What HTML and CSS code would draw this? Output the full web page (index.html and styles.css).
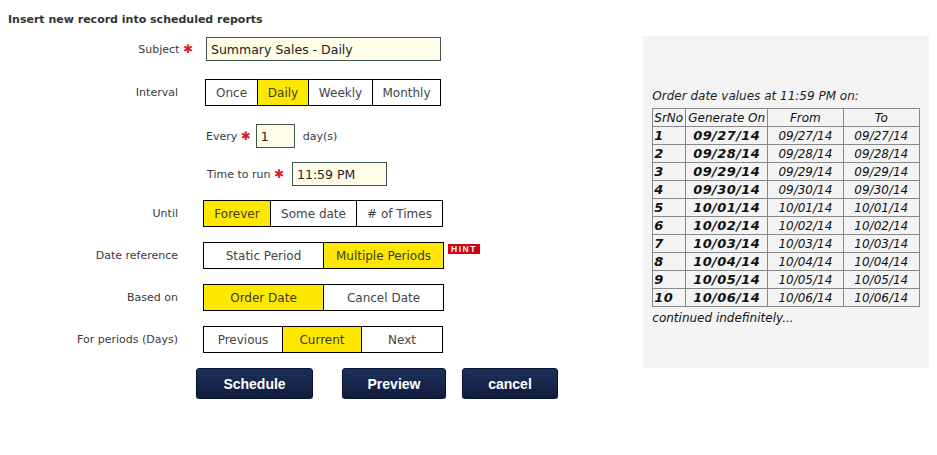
FILE: index.html
```html
<!DOCTYPE html>
<html lang="en">
<head>
    <meta charset="UTF-8">
    <title>Scheduled reports</title>
    <link rel="stylesheet" href="styles.css">
</head>
<body>
    <div class="page">
        <div class="form">
            <h3 class="title">Insert new record into scheduled reports</h3>

            <div class="row row-subject">
                <label class="label label-wide">Subject <span class="req">✱</span></label>
                <input type="text" class="field field-subject" value="Summary Sales - Daily">
            </div>

            <div class="row row-toggle row-interval">
                <span class="label">Interval</span>
                <div class="toggle toggle-interval">
                    <span class="opt">Once</span>
                    <span class="opt on">Daily</span>
                    <span class="opt">Weekly</span>
                    <span class="opt">Monthly</span>
                </div>
            </div>

            <div class="row row-sub row-every">
                <label class="sublabel">Every <span class="req">✱</span></label>
                <input type="text" class="field field-every" value="1">
                <span class="unit">day(s)</span>
            </div>

            <div class="row row-sub row-time">
                <label class="sublabel">Time to run <span class="req">✱</span></label>
                <input type="text" class="field field-time" value="11:59 PM">
            </div>

            <div class="row row-toggle">
                <span class="label">Until</span>
                <div class="toggle toggle-until">
                    <span class="opt on">Forever</span>
                    <span class="opt">Some date</span>
                    <span class="opt"># of Times</span>
                </div>
            </div>

            <div class="row row-toggle">
                <span class="label">Date reference</span>
                <div class="toggle toggle-two">
                    <span class="opt">Static Period</span>
                    <span class="opt on">Multiple Periods</span>
                </div>
                <span class="hint">HINT</span>
            </div>

            <div class="row row-toggle">
                <span class="label">Based on</span>
                <div class="toggle toggle-two">
                    <span class="opt on">Order Date</span>
                    <span class="opt">Cancel Date</span>
                </div>
            </div>

            <div class="row row-toggle">
                <span class="label">For periods (Days)</span>
                <div class="toggle toggle-periods">
                    <span class="opt">Previous</span>
                    <span class="opt on">Current</span>
                    <span class="opt">Next</span>
                </div>
            </div>

            <div class="actions">
                <button class="btn btn-schedule">Schedule</button>
                <button class="btn btn-preview">Preview</button>
                <button class="btn btn-cancel">cancel</button>
            </div>
        </div>

        <div class="preview">
            <p class="caption">Order date values at 11:59 PM on:</p>
            <table class="dates">
                <tr><th class="c-no">SrNo</th><th>Generate On</th><th>From</th><th>To</th></tr>
                <tr><td class="c-no">1</td><td class="c-gen">09/27/14</td><td>09/27/14</td><td>09/27/14</td></tr>
                <tr><td class="c-no">2</td><td class="c-gen">09/28/14</td><td>09/28/14</td><td>09/28/14</td></tr>
                <tr><td class="c-no">3</td><td class="c-gen">09/29/14</td><td>09/29/14</td><td>09/29/14</td></tr>
                <tr><td class="c-no">4</td><td class="c-gen">09/30/14</td><td>09/30/14</td><td>09/30/14</td></tr>
                <tr><td class="c-no">5</td><td class="c-gen">10/01/14</td><td>10/01/14</td><td>10/01/14</td></tr>
                <tr><td class="c-no">6</td><td class="c-gen">10/02/14</td><td>10/02/14</td><td>10/02/14</td></tr>
                <tr><td class="c-no">7</td><td class="c-gen">10/03/14</td><td>10/03/14</td><td>10/03/14</td></tr>
                <tr><td class="c-no">8</td><td class="c-gen">10/04/14</td><td>10/04/14</td><td>10/04/14</td></tr>
                <tr><td class="c-no">9</td><td class="c-gen">10/05/14</td><td>10/05/14</td><td>10/05/14</td></tr>
                <tr><td class="c-no">10</td><td class="c-gen">10/06/14</td><td>10/06/14</td><td>10/06/14</td></tr>
            </table>
            <p class="more">continued indefinitely...</p>
        </div>
    </div>
</body>
</html>
```

FILE: styles.css
```css
body {
    margin: 0;
    padding: 0 8px;
    font-family: "DejaVu Sans", Verdana, sans-serif;
    font-size: 11px;
    color: #3a3a3a;
    background: #fff;
}
.page {
    display: flex;
    align-items: flex-start;
}
.form {
    width: 636px;
    display: flex;
    flex-direction: column;
}
.title {
    margin: 13px 0 0;
    font-size: 11px;
    line-height: 14px;
    font-weight: bold;
    color: #333;
}
.row {
    display: flex;
    align-items: center;
}
.row-subject {
    margin-top: 10px;
    height: 24px;
}
.label {
    width: 170px;
    text-align: right;
    margin-right: 25px;
}
.label-wide {
    width: 185px;
    margin-right: 13px;
}
.req {
    color: #d3202a;
    font-weight: bold;
    font-size: 12px;
}
.field {
    box-sizing: border-box;
    height: 24px;
    padding: 0 4px;
    border: 1px solid #3d5449;
    background: #fffdea;
    font-family: "DejaVu Sans", Verdana, sans-serif;
    font-size: 12.5px;
    color: #222;
}
.field-subject {
    width: 235px;
}
.row-toggle {
    margin-top: 15px;
    height: 27px;
}
.row-interval {
    margin-top: 18px;
}
.toggle {
    display: grid;
    height: 27px;
    box-sizing: border-box;
    border: 1px solid #000;
    font-size: 12px;
    color: #444;
}
.opt {
    display: flex;
    align-items: center;
    justify-content: center;
    border-left: 1px solid #000;
    background: #fff;
}
.opt:first-child {
    border-left: none;
}
.opt.on {
    background: #ffe800;
    color: #3b3b20;
}
.toggle-interval {
    margin-left: 2px;
    grid-template-columns: 51px 51px 64px 68px;
}
.toggle-until {
    grid-template-columns: 66px 86px 86px;
}
.toggle-two {
    grid-template-columns: 119px 120px;
}
.toggle-periods {
    grid-template-columns: 78px 79px 81px;
}
.hint {
    align-self: flex-start;
    margin: 2px 0 0 4px;
    padding: 0 3px;
    height: 10px;
    line-height: 10px;
    background: #d4000e;
    color: #fff;
    font-family: "Liberation Sans", Arial, sans-serif;
    font-weight: bold;
    font-size: 8.5px;
    letter-spacing: 1.5px;
}
.row-sub {
    padding-left: 198px;
    height: 24px;
}
.row-every {
    margin-top: 18px;
}
.row-time {
    margin-top: 14px;
}
.row-time + .row-toggle {
    margin-top: 14px;
}
.sublabel {
    margin-right: 5px;
}
.field-every {
    width: 39px;
}
.unit {
    margin-left: 8px;
}
.row-time .sublabel {
    margin-left: 1px;
    margin-right: 8px;
}
.field-time {
    width: 95px;
}
.actions {
    display: flex;
    margin: 15px 0 0 188px;
}
.btn {
    height: 31px;
    border: 1px solid #0b1530;
    border-radius: 3px;
    background: linear-gradient(#1d2f5a, #101c3c);
    box-shadow: 0 1px 1px #8a8a8a;
    color: #fff;
    font-family: "Liberation Sans", Arial, sans-serif;
    font-weight: bold;
    font-size: 14px;
    cursor: pointer;
}
.btn-schedule {
    width: 117px;
}
.btn-preview {
    width: 104px;
    margin-left: 29px;
}
.btn-cancel {
    width: 96px;
    margin-left: 16px;
}
.preview {
    margin-top: 36px;
    width: 286px;
    height: 332px;
    box-sizing: border-box;
    padding: 52px 9px 0;
    background: #f4f4f4;
    color: #111;
}
.caption {
    margin: 0 0 3px;
    font-style: italic;
    font-size: 12px;
    line-height: 17px;
    color: #222;
}
.dates {
    border-collapse: collapse;
    font-style: italic;
    font-size: 12px;
}
.dates th,
.dates td {
    border: 1px solid #888;
    height: 17px;
    padding: 0 1px;
    text-align: center;
    font-weight: normal;
    white-space: nowrap;
}
.dates th:nth-child(1) { width: 30px; }
.dates th:nth-child(2) { width: 79px; }
.dates th:nth-child(3) { width: 73px; }
.dates th:nth-child(4) { width: 74px; }
.dates .c-no {
    text-align: left;
}
.dates td.c-no,
.dates td.c-gen {
    font-weight: bold;
    font-size: 13px;
    letter-spacing: 0.4px;
}
.more {
    margin: 4px 0 0;
    font-style: italic;
    font-size: 12px;
}
```
